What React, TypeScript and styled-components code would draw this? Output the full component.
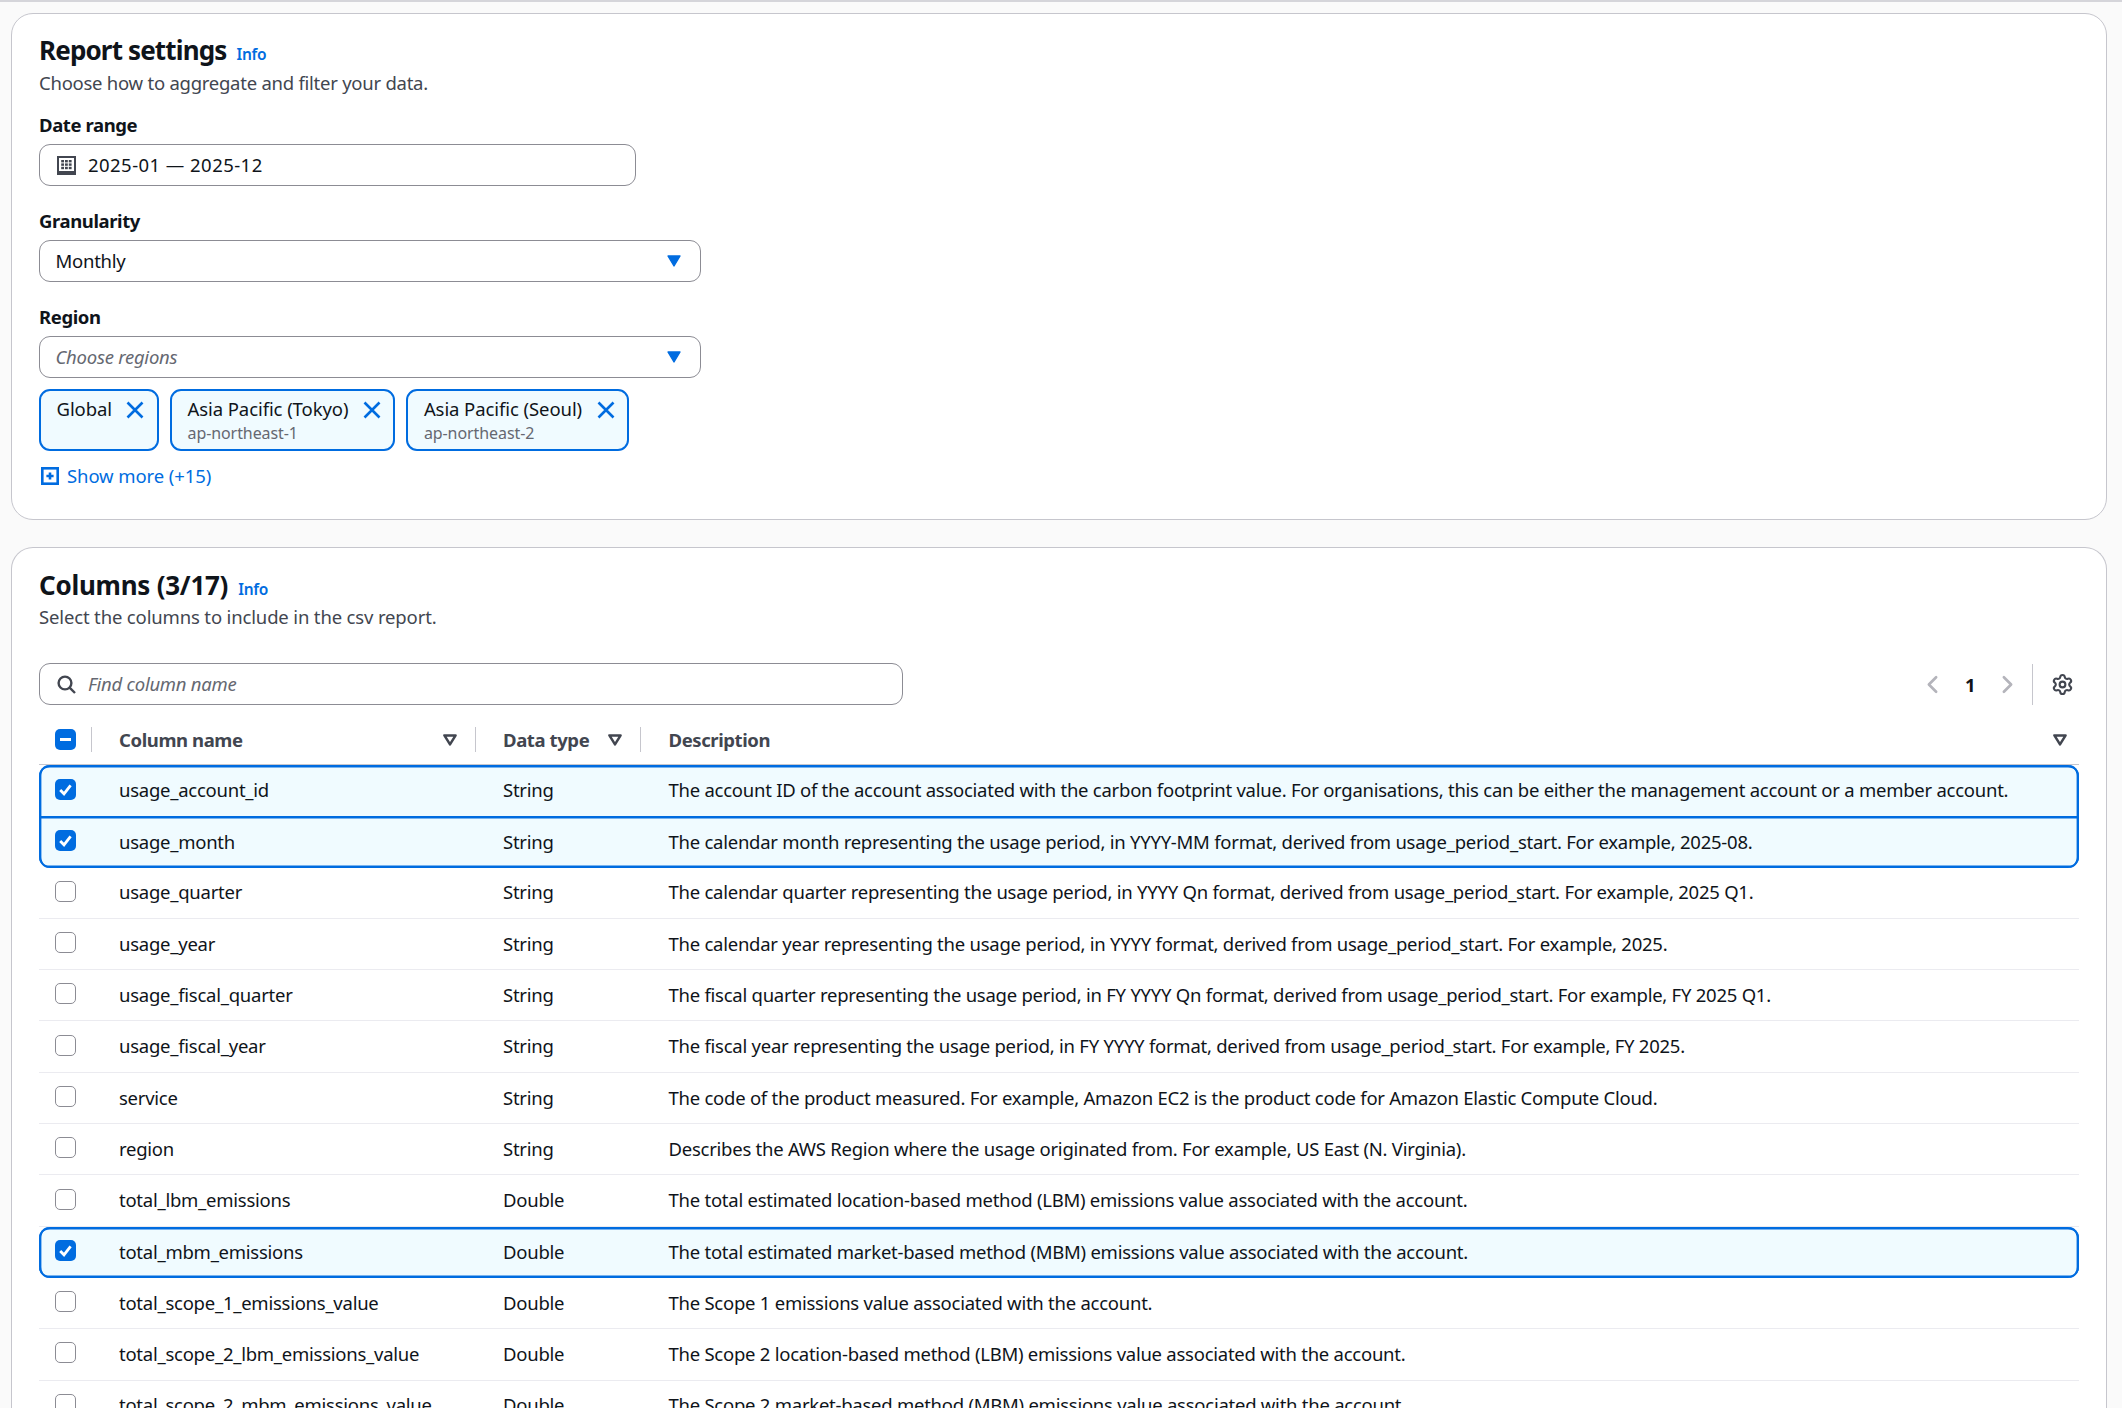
import styled, { createGlobalStyle } from 'styled-components';
import { ChevronLeft, ChevronRight, Settings } from 'lucide-react';

type Column = {
  name: string;
  type: string;
  description: string;
  selected?: boolean;
  first?: boolean;
  last?: boolean;
};

const columns: Column[] = [
  { name: 'usage_account_id', type: 'String', description: 'The account ID of the account associated with the carbon footprint value. For organisations, this can be either the management account or a member account.', selected: true, first: true },
  { name: 'usage_month', type: 'String', description: 'The calendar month representing the usage period, in YYYY-MM format, derived from usage_period_start. For example, 2025-08.', selected: true, last: true },
  { name: 'usage_quarter', type: 'String', description: 'The calendar quarter representing the usage period, in YYYY Qn format, derived from usage_period_start. For example, 2025 Q1.' },
  { name: 'usage_year', type: 'String', description: 'The calendar year representing the usage period, in YYYY format, derived from usage_period_start. For example, 2025.' },
  { name: 'usage_fiscal_quarter', type: 'String', description: 'The fiscal quarter representing the usage period, in FY YYYY Qn format, derived from usage_period_start. For example, FY 2025 Q1.' },
  { name: 'usage_fiscal_year', type: 'String', description: 'The fiscal year representing the usage period, in FY YYYY format, derived from usage_period_start. For example, FY 2025.' },
  { name: 'service', type: 'String', description: 'The code of the product measured. For example, Amazon EC2 is the product code for Amazon Elastic Compute Cloud.' },
  { name: 'region', type: 'String', description: 'Describes the AWS Region where the usage originated from. For example, US East (N. Virginia).' },
  { name: 'total_lbm_emissions', type: 'Double', description: 'The total estimated location-based method (LBM) emissions value associated with the account.' },
  { name: 'total_mbm_emissions', type: 'Double', description: 'The total estimated market-based method (MBM) emissions value associated with the account.', selected: true, first: true, last: true },
  { name: 'total_scope_1_emissions_value', type: 'Double', description: 'The Scope 1 emissions value associated with the account.' },
  { name: 'total_scope_2_lbm_emissions_value', type: 'Double', description: 'The Scope 2 location-based method (LBM) emissions value associated with the account.' },
  { name: 'total_scope_2_mbm_emissions_value', type: 'Double', description: 'The Scope 2 market-based method (MBM) emissions value associated with the account.' },
];

const CalendarIcon = () => (
  <svg width="19" height="19" viewBox="0 0 19 19">
    <rect x="1" y="1" width="17" height="17" fill="none" stroke="#424650" strokeWidth="2" />
    <rect x="1" y="15" width="17" height="3" fill="#424650" />
    {[4.2, 8, 11.8].map((x) => [4, 7.4, 10.8].map((y) => (
      <rect key={`${x}-${y}`} x={x} y={y} width="2.8" height="2.4" fill="#424650" />
    )))}
  </svg>
);

const SearchIcon = () => (
  <svg width="19" height="19" viewBox="0 0 19 19" fill="none" stroke="#424650" strokeWidth="2.4">
    <circle cx="8" cy="8" r="6.4" />
    <path d="M12.6 12.6 L18 18" />
  </svg>
);

const CaretFilled = () => (
  <svg width="14" height="12" viewBox="0 0 14 12">
    <path d="M1 1 H13 L7 11 Z" fill="#006ce0" stroke="#006ce0" strokeWidth="1.4" strokeLinejoin="round" />
  </svg>
);

const SortCaret = () => (
  <svg width="14" height="12" viewBox="0 0 14 12">
    <path d="M1.4 1.4 H12.6 L7 10.4 Z" fill="none" stroke="#424650" strokeWidth="2.5" strokeLinejoin="round" />
  </svg>
);

const CloseIcon = () => (
  <svg width="18" height="18" viewBox="0 0 18 18" fill="none" stroke="#006ce0" strokeWidth="2.6">
    <path d="M1.5 1.5 L16.5 16.5 M16.5 1.5 L1.5 16.5" />
  </svg>
);

const PlusBoxIcon = () => (
  <svg width="18" height="18" viewBox="0 0 18 18" fill="none" stroke="#006ce0">
    <rect x="1.3" y="1.3" width="15.4" height="15.4" strokeWidth="2.6" />
    <path d="M9 5.4 V12.6 M5.4 9 H12.6" strokeWidth="2.6" />
  </svg>
);

const CheckMark = () => (
  <svg width="21" height="21" viewBox="0 0 21 21" fill="none" stroke="#fff" strokeWidth="2.8">
    <path d="M5.2 11 L9 14.8 L15.6 6.4" />
  </svg>
);

const tokens = [
  { label: 'Global' },
  { label: 'Asia Pacific (Tokyo)', sub: 'ap-northeast-1' },
  { label: 'Asia Pacific (Seoul)', sub: 'ap-northeast-2' },
];

export default function App() {
  return (
    <>
      <GlobalStyle />
      <Page>
        <TopRule />
        <Card>
          <TitleRow>
            <Title>Report settings</Title>
            <InfoLink>Info</InfoLink>
          </TitleRow>
          <Description>Choose how to aggregate and filter your data.</Description>
          <Form>
            <Field>
              <Label>Date range</Label>
              <Control $width={597}>
                <CalendarIcon />
                <DateValue>2025-01 — 2025-12</DateValue>
              </Control>
            </Field>
            <Field>
              <Label>Granularity</Label>
              <Select>
                <span>Monthly</span>
                <CaretFilled />
              </Select>
            </Field>
            <Field>
              <Label>Region</Label>
              <Select>
                <Placeholder>Choose regions</Placeholder>
                <CaretFilled />
              </Select>
              <Tokens>
                {tokens.map((t) => (
                  <Token key={t.label}>
                    <div>
                      <div>{t.label}</div>
                      {t.sub && <TokenSub>{t.sub}</TokenSub>}
                    </div>
                    <CloseIcon />
                  </Token>
                ))}
              </Tokens>
            </Field>
          </Form>
          <ShowMore>
            <PlusBoxIcon />
            Show more (+15)
          </ShowMore>
        </Card>

        <ColumnsCard>
          <TitleRow>
            <ColumnsTitle>Columns (3/17)</ColumnsTitle>
            <InfoLink>Info</InfoLink>
          </TitleRow>
          <ColumnsDescription>Select the columns to include in the csv report.</ColumnsDescription>
          <Toolbar>
            <Control $width={864}>
              <SearchIcon />
              <Placeholder>Find column name</Placeholder>
            </Control>
            <Pager>
              <ChevronLeft size={29} color="#b4b4bb" strokeWidth={2.2} />
              <PageNumber>1</PageNumber>
              <ChevronRight size={29} color="#b4b4bb" strokeWidth={2.2} />
              <PagerDivider />
              <Settings size={23} color="#424650" strokeWidth={2.2} />
            </Pager>
          </Toolbar>
          <HeaderRow>
            <HeaderCell $pad="0 0 0 16px">
              <Check $state="mixed"><Dash /></Check>
            </HeaderCell>
            <HeaderCell>
              Column name
              <SortCaret />
            </HeaderCell>
            <HeaderCell>
              Data type
              <SortCaret />
            </HeaderCell>
            <HeaderCell $last>
              Description
              <SortCaret />
            </HeaderCell>
          </HeaderRow>
          {columns.map((c) => (
            <Row key={c.name} $selected={c.selected} $first={c.first} $last={c.last}>
              <CheckCell>
                {c.selected ? <Check $state="on"><CheckMark /></Check> : <Check $state="off" />}
              </CheckCell>
              <Cell>{c.name}</Cell>
              <Cell>{c.type}</Cell>
              <Cell>{c.description}</Cell>
            </Row>
          ))}
        </ColumnsCard>
      </Page>
    </>
  );
}

const GlobalStyle = createGlobalStyle`
  html, body {
    margin: 0;
    height: 1408px;
    overflow: hidden;
    background: #fafafa;
  }
  body {
    font-family: "Noto Sans", "Open Sans", sans-serif;
    font-size: 18.5px;
    letter-spacing: -0.25px;
    color: #0f141a;
  }
  * { box-sizing: border-box; }
`;

const Page = styled.div`
  width: 2122px;
  height: 1408px;
  overflow: hidden;
  padding: 0 15px 0 11px;
`;

const TopRule = styled.div`
  height: 2px;
  margin: 0 -15px 11px -11px;
  background: #d5d5da;
`;

const Card = styled.section`
  background: #fff;
  border: 1.4px solid #c6c6cd;
  border-radius: 22px;
  padding: 20px 27px 30px;
`;

const ColumnsCard = styled(Card)`
  margin-top: 27px;
  padding-top: 21px;
  padding-bottom: 0;
  border-bottom: 0;
  border-bottom-left-radius: 0;
  border-bottom-right-radius: 0;
`;

const TitleRow = styled.div`
  display: flex;
  align-items: baseline;
  gap: 10px;
  height: 33px;
  line-height: 33px;
`;

const Title = styled.h2`
  margin: 0;
  font-size: 26px;
  font-weight: 700;
  letter-spacing: -0.85px;
`;

const ColumnsTitle = styled(Title)`
  letter-spacing: -0.25px;
`;

const InfoLink = styled.a`
  font-size: 15.5px;
  font-weight: 600;
  color: #006ce0;
`;

const Description = styled.p`
  margin: 2px 0 0;
  line-height: 27px;
  color: #424650;
`;

const ColumnsDescription = styled(Description)`
  margin-top: 1px;
  letter-spacing: -0.15px;
`;

const Form = styled.div`
  display: flex;
  flex-direction: column;
  gap: 21px;
  margin-top: 15px;
`;

const Field = styled.div`
  display: flex;
  flex-direction: column;
  align-items: flex-start;
`;

const Label = styled.label`
  font-weight: 700;
  line-height: 27px;
  margin-bottom: 6px;
  letter-spacing: -0.4px;
`;

const Control = styled.div<{ $width: number }>`
  display: flex;
  align-items: center;
  gap: 12px;
  width: ${(p) => p.$width}px;
  height: 42px;
  padding: 0 17px;
  background: #fff;
  border: 1.4px solid #8c8c94;
  border-radius: 11px;

  > span {
    margin-top: -2px;
  }
`;

const DateValue = styled.span`
  color: #0f141a;
  letter-spacing: 0.45px;
`;

const Select = styled(Control).attrs({ $width: 662 })`
  justify-content: space-between;
  padding: 0 19px 0 15.5px;
`;

const Placeholder = styled.span`
  font-style: italic;
  color: #656871;
`;

const Tokens = styled.div`
  display: flex;
  gap: 11px;
  margin-top: 11px;
`;

const Token = styled.div`
  display: flex;
  align-items: flex-start;
  gap: 14.5px;
  height: 62px;
  padding: 5px 12.5px 0 15.5px;
  background: #f0fbff;
  border: 2.4px solid #006ce0;
  border-radius: 11px;
  line-height: 25px;
  letter-spacing: -0.08px;

  svg {
    margin-top: 4.5px;
  }
`;

const TokenSub = styled.div`
  margin-top: 1px;
  font-size: 16px;
  line-height: 22px;
  color: #656871;
`;

const ShowMore = styled.a`
  display: flex;
  align-items: center;
  gap: 8px;
  height: 27px;
  margin-top: 11px;
  padding-left: 2px;
  color: #006ce0;
  letter-spacing: -0.1px;
`;

const Toolbar = styled.div`
  display: flex;
  justify-content: space-between;
  align-items: center;
  margin-top: 33px;
`;

const Pager = styled.div`
  display: flex;
  align-items: center;
  padding-right: 5.5px;
`;

const PageNumber = styled.span`
  width: 46px;
  text-align: center;
  font-weight: 700;
`;

const PagerDivider = styled.div`
  width: 1.4px;
  height: 41px;
  margin: 0 17.5px 0 9.5px;
  background: #c6c6cd;
`;

const grid = `
  display: grid;
  grid-template-columns: 52.5px 384px 165.5px 1fr;
`;

const HeaderRow = styled.div`
  ${grid}
  align-items: center;
  height: 60px;
  padding-top: 10px;
  border-bottom: 1.4px solid #c6c6cd;
  color: #424650;
  font-weight: 700;
  letter-spacing: -0.4px;
`;

const HeaderCell = styled.div<{ $pad?: string; $last?: boolean }>`
  display: flex;
  align-items: center;
  justify-content: space-between;
  height: 25px;
  padding: ${(p) => p.$pad ?? (p.$last ? '0 12px 0 27.5px' : '0 18px 0 27.5px')};
  border-right: ${(p) => (p.$last ? '0' : '1.4px solid #c6c6cd')};
`;

const BLUE = '#006ce0';

const Row = styled.div<{ $selected?: boolean; $first?: boolean; $last?: boolean }>`
  ${grid}
  height: 51.3px;
  align-items: center;
  background: ${(p) => (p.$selected ? '#f0fbff' : '#fff')};
  border-bottom: ${(p) => (p.$selected ? '0' : '1.4px solid #ebebf0')};
  border-radius: ${(p) => (p.$first ? '11px 11px' : '0 0')} ${(p) => (p.$last ? '11px 11px' : '0 0')};
  box-shadow: ${(p) => (p.$selected
    ? `inset 2.4px 0 0 ${BLUE}, inset -2.4px 0 0 ${BLUE}, inset 0 2.4px 0 ${BLUE}${p.$last ? `, inset 0 -2.4px 0 ${BLUE}` : ''}`
    : 'none')};
`;

const CheckCell = styled.div`
  display: flex;
  padding-left: 16px;
  margin-top: -3px;
`;

const Cell = styled.div`
  padding: 0 0 1.5px 27.5px;
  white-space: nowrap;
`;

const Check = styled.div<{ $state: 'on' | 'off' | 'mixed' }>`
  display: flex;
  align-items: center;
  justify-content: center;
  width: 21px;
  height: 21px;
  border-radius: 5px;
  background: ${(p) => (p.$state === 'off' ? '#fff' : '#006ce0')};
  border: ${(p) => (p.$state === 'off' ? '1.4px solid #8c8c94' : '0')};
`;

const Dash = styled.div`
  width: 11px;
  height: 3.4px;
  background: #fff;
`;
